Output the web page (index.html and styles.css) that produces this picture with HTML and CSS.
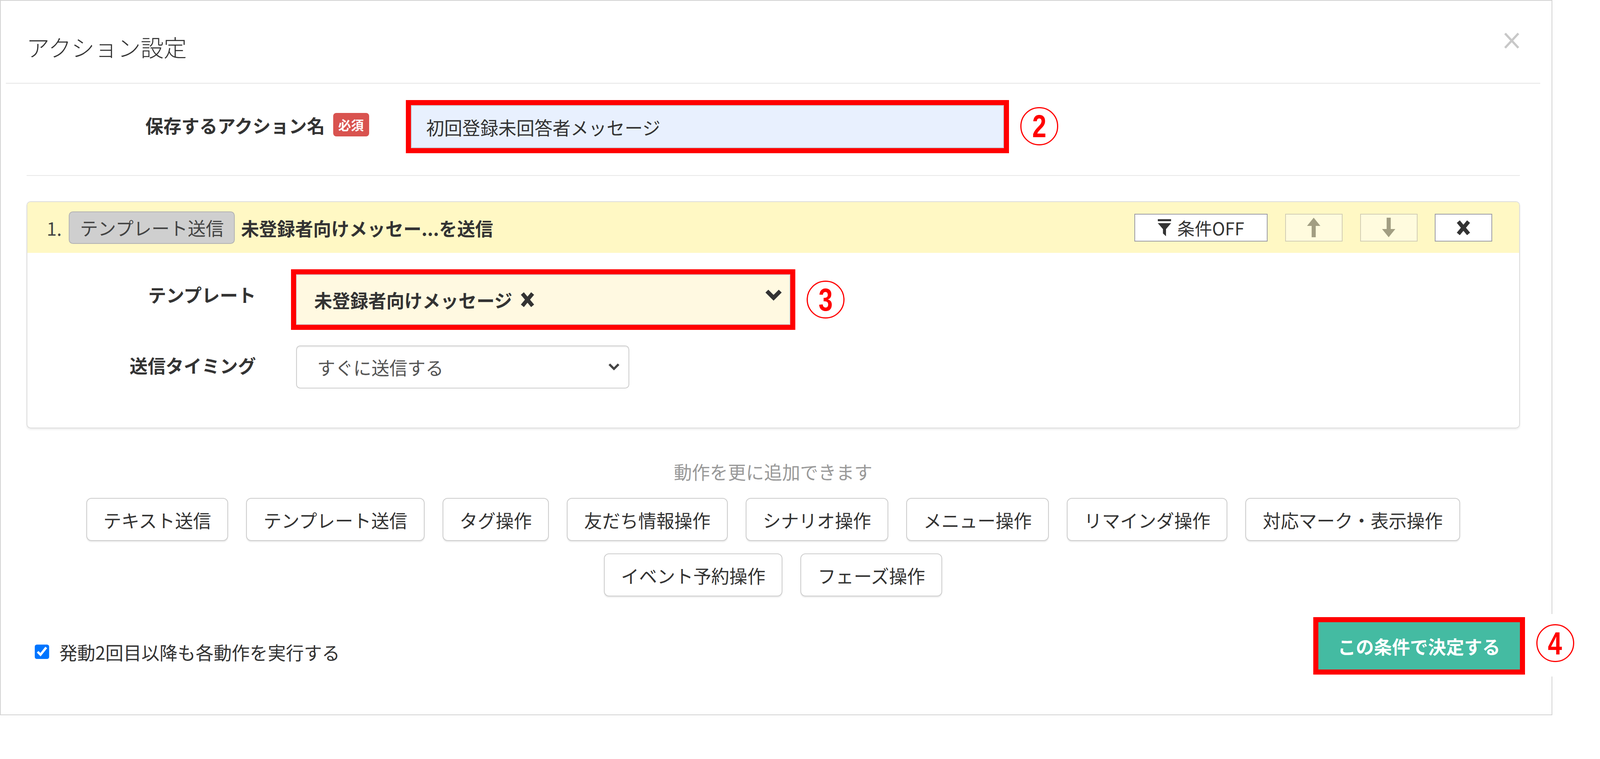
FILE: index.html
```html
<!DOCTYPE html>
<html lang="ja">
<head>
    <meta charset="UTF-8">
    <meta name="viewport" content="width=device-width, initial-scale=1.0">
    <title>アクション設定</title>
    <link rel="stylesheet" href="styles.css">
</head>
<body>

    <div class="modal">
        <div class="modal-header">
            <h4 class="modal-title">アクション設定</h4>
            <button type="button" class="close" aria-label="閉じる">
                <svg viewBox="0 0 16 16" width="16" height="16"><path d="M1.5 1l13 14M14.5 1l-13 14" stroke="#c8c8c8" stroke-width="2.2" fill="none"/></svg>
            </button>
        </div>

        <div class="modal-body">
            <div class="name-row">
                <div class="name-label">
                    <label for="action-name">保存するアクション名</label>
                    <span class="badge-required">必須</span>
                </div>
                <input type="text" id="action-name" class="name-input" value="初回登録未回答者メッセージ">
                <span class="mark-num mark-name"><span>2</span></span>
            </div>

            <hr class="divider">

            <div class="action-card">
                <div class="action-head">
                    <span class="action-no">1.</span>
                    <span class="action-type">テンプレート送信</span>
                    <strong class="action-title">未登録者向けメッセー...を送信</strong>
                    <div class="head-tools">
                        <button type="button" class="tool-btn cond-btn">
                            <svg viewBox="0 0 14 18" width="13" height="18"><path d="M0 0h14v2.2H0z M0 4.2h14L8.6 10.5V18L5.4 15V10.5z" fill="#333"/></svg>
                            条件OFF
                        </button>
                        <button type="button" class="tool-btn" disabled>
                            <svg viewBox="0 0 13 19" width="13" height="19"><path d="M6.5 0L13 8H8.5V19H4.5V8H0z" fill="#333"/></svg>
                        </button>
                        <button type="button" class="tool-btn" disabled>
                            <svg viewBox="0 0 13 19" width="13" height="19"><path d="M6.5 19L0 11H4.5V0H8.5V11H13z" fill="#333"/></svg>
                        </button>
                        <button type="button" class="tool-btn">
                            <svg viewBox="0 0 14 15" width="14" height="15"><path d="M2 1.5l10 12M12 1.5l-10 12" stroke="#333" stroke-width="3.8" fill="none"/></svg>
                        </button>
                    </div>
                </div>

                <div class="action-body">
                    <div class="field-row">
                        <div class="field-label">テンプレート</div>
                        <div class="tpl-select">
                            <span class="tpl-value">未登録者向けメッセージ
                                <svg viewBox="0 0 14 15" width="14" height="15"><path d="M2 1.5l10 12M12 1.5l-10 12" stroke="#333" stroke-width="3.8" fill="none"/></svg>
                            </span>
                            <svg class="tpl-caret" viewBox="0 0 17 13" width="17" height="13"><polyline points="2,3 8.5,9.5 15,3" stroke="#333" stroke-width="4" fill="none"/></svg>
                        </div>
                        <span class="mark-num mark-tpl"><span>3</span></span>
                    </div>
                    <div class="field-row">
                        <div class="field-label">送信タイミング</div>
                        <div class="plain-select">
                            <span>すぐに送信する</span>
                            <svg viewBox="0 0 12 8" width="12" height="8"><polyline points="1.5,1.5 6,6 10.5,1.5" stroke="#444" stroke-width="2.2" fill="none"/></svg>
                        </div>
                    </div>
                </div>
            </div>

            <p class="add-hint">動作を更に追加できます</p>
            <div class="add-list">
                <button type="button" class="add-btn">テキスト送信</button>
                <button type="button" class="add-btn">テンプレート送信</button>
                <button type="button" class="add-btn">タグ操作</button>
                <button type="button" class="add-btn">友だち情報操作</button>
                <button type="button" class="add-btn">シナリオ操作</button>
                <button type="button" class="add-btn">メニュー操作</button>
                <button type="button" class="add-btn">リマインダ操作</button>
                <button type="button" class="add-btn">対応マーク・表示操作</button>
                <button type="button" class="add-btn">イベント予約操作</button>
                <button type="button" class="add-btn">フェーズ操作</button>
            </div>

            <div class="modal-foot">
                <label class="check-label">
                    <input type="checkbox" checked>
                    発動2回目以降も各動作を実行する
                </label>
                <div class="submit-wrap">
                    <button type="button" class="btn-submit">この条件で決定する</button>
                    <span class="submit-mark"><span class="mark-num"><span>4</span></span></span>
                </div>
            </div>
        </div>
    </div>

</body>
</html>
```

FILE: styles.css
```css
html {
    zoom: 2.6256;
}
body {
    margin: 0;
    font-family: "Noto Sans CJK JP", "Noto Sans", sans-serif;
    font-size: 17.6px;
    line-height: 24px;
    color: #333;
    background: #fff;
}
button, input {
    font: inherit;
    color: inherit;
}
.modal {
    position: relative;
    width: 1512px;
    border: 1px solid #d2d2d2;
    background: #fff;
}
.modal-header {
    display: flex;
    justify-content: space-between;
    align-items: flex-start;
    margin: 0 11px 0 5px;
    padding: 28px 20px 19px 20px;
    border-bottom: 1px solid #e5e5e5;
}
.modal-title {
    margin: 0;
    font-size: 22.5px;
    line-height: 33px;
    font-weight: 300;
}
.close {
    display: flex;
    padding: 0;
    margin-top: 3px;
    border: 0;
    background: none;
}
.modal-body {
    padding: 21px 31px 44px 25px;
}
.name-row {
    display: flex;
    align-items: flex-start;
}
.name-label {
    width: 334px;
    display: flex;
    justify-content: flex-end;
    align-items: center;
    gap: 8px;
    margin-right: 41px;
    padding-top: 7px;
    font-weight: 700;
}
.badge-required {
    height: 23px;
    padding: 0 5px;
    border-radius: 3px;
    background: #d9534f;
    color: #fff;
    font-size: 12.5px;
    line-height: 23px;
}
.name-input {
    width: 578px;
    height: 42px;
    box-sizing: border-box;
    margin: 0;
    padding: 0 14px;
    border: 1px solid #c6ccd6;
    background: #e8f0fe;
    outline: 5px solid #f00;
}
.mark-num {
    display: inline-flex;
    align-items: center;
    justify-content: center;
    width: 37px;
    height: 37px;
    box-sizing: border-box;
    border: 1.5px solid #f00;
    border-radius: 50%;
    color: #f00;
    font-family: "Liberation Sans", sans-serif;
    font-size: 31px;
    font-weight: 700;
    line-height: 1;
}
.mark-num span {
    display: inline-block;
    transform: scaleX(.8);
}
.mark-name {
    margin: 2px 0 0 16px;
}
.divider {
    margin: 26px 0 25px;
    border: 0;
    border-top: 1px solid #e8e8e8;
}
.action-card {
    border: 1px solid #dcdcdc;
    border-radius: 4px;
    box-shadow: 0 1px 2px rgba(0, 0, 0, .08);
}
.action-head {
    display: flex;
    align-items: center;
    padding: 9px 26px 9px 19px;
    background: #fff8c4;
    border-radius: 3px 3px 0 0;
}
.action-no {
    color: #444;
}
.action-type {
    height: 30px;
    margin-left: 7px;
    padding: 0 10px;
    border: 1px solid #b3b3b3;
    border-radius: 4px;
    background: #cfcfcf;
    color: #444;
    line-height: 30px;
}
.action-title {
    margin-left: 6px;
}
.head-tools {
    display: flex;
    gap: 17px;
    margin-left: auto;
}
.tool-btn {
    display: flex;
    align-items: center;
    justify-content: center;
    gap: 6px;
    width: 56px;
    height: 27px;
    padding: 0;
    border: 1px solid #9a9aa4;
    background: #fff;
    font-size: 17px;
}
.tool-btn:disabled {
    opacity: .45;
}
.cond-btn {
    width: 130px;
}
.action-body {
    padding: 21px 0 38px;
}
.field-row {
    display: flex;
    align-items: flex-start;
}
.field-row + .field-row {
    margin-top: 20px;
}
.field-label {
    width: 223px;
    margin-right: 39px;
    padding-top: 7px;
    text-align: right;
    font-weight: 700;
}
.tpl-select {
    display: flex;
    align-items: center;
    justify-content: space-between;
    width: 482px;
    height: 49px;
    box-sizing: border-box;
    padding: 0 7px 0 17px;
    border: 1px solid #d6d6d6;
    background: #fff9e1;
    outline: 5px solid #f00;
    font-weight: 700;
}
.tpl-value {
    display: flex;
    align-items: center;
    gap: 8px;
}
.tpl-caret {
    margin-bottom: 10px;
}
.mark-tpl {
    align-self: center;
    margin-left: 16px;
}
.plain-select {
    display: flex;
    align-items: center;
    justify-content: space-between;
    width: 325px;
    height: 42px;
    box-sizing: border-box;
    padding: 0 8px 0 20px;
    border: 1px solid #ccc;
    border-radius: 4px;
    color: #555;
    box-shadow: inset 0 1px 1px rgba(0, 0, 0, .06);
}
.add-hint {
    margin: 30px 0 14px;
    text-align: center;
    color: #999;
}
.add-list {
    display: flex;
    flex-wrap: wrap;
    justify-content: center;
    gap: 12px 17.5px;
}
.add-btn {
    height: 42px;
    padding: 0 16px;
    border: 1px solid #ccc;
    border-radius: 5px;
    background: #fff;
    box-shadow: 0 1px 1px rgba(0, 0, 0, .08);
}
.modal-foot {
    display: flex;
    justify-content: space-between;
    align-items: flex-end;
    margin-top: 25px;
}
.check-label {
    display: flex;
    align-items: center;
    gap: 9px;
    margin: 0 0 5px 8px;
}
.check-label input {
    width: 15px;
    height: 15px;
    margin: 0;
    accent-color: #0075ff;
}
.submit-wrap {
    position: relative;
    display: flex;
}
.btn-submit {
    height: 46px;
    padding: 0 19px;
    border: 0;
    background: #44bba2;
    color: #fff;
    font-weight: 700;
    outline: 5px solid #f00;
}
.submit-mark {
    position: absolute;
    left: calc(100% + 10px);
    top: -8px;
    display: flex;
    padding: 10px 6px 14px;
    background: #fff;
}
```
